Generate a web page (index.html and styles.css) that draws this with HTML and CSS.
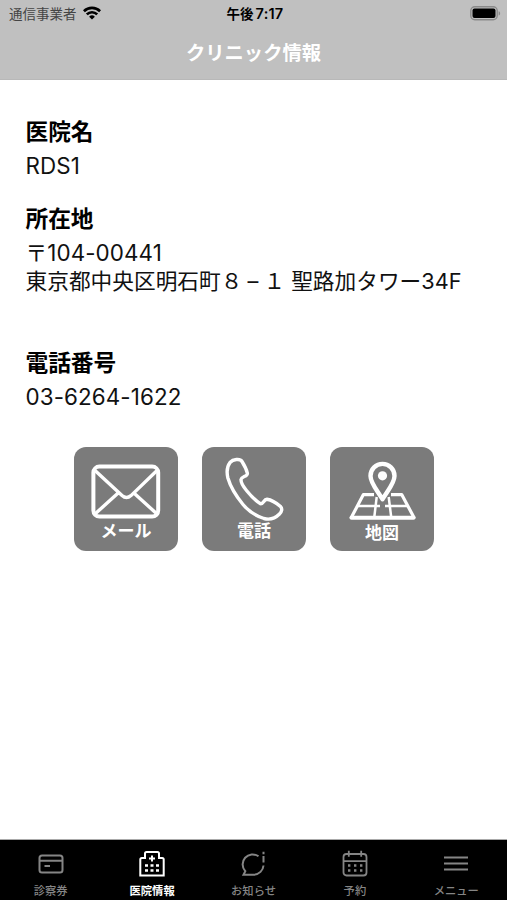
FILE: index.html
```html
<!DOCTYPE html>
<html lang="ja">
<head>
  <meta charset="UTF-8">
  <meta name="viewport" content="width=device-width, initial-scale=1.0">
  <title>クリニック情報</title>
  <link rel="stylesheet" href="styles.css">
</head>
<body>
  <header>
    <div class="status">
      <div class="carrier">
        <span>通信事業者</span>
        <svg class="wifi" width="18" height="14" viewBox="0 0 18 14" fill="none" stroke="#000" stroke-width="2.7">
          <path d="M.9 5.2a11.6 11.6 0 0 1 16.2 0"/>
          <path d="M3.8 8.4a7.4 7.4 0 0 1 10.4 0"/>
          <path d="M9 13.6L6.1 10.7a4.2 4.2 0 0 1 5.8 0z" fill="#000" stroke="none"/>
        </svg>
      </div>
      <div class="time">午後<span>7:17</span></div>
      <svg class="battery" width="31" height="15" viewBox="0 0 31 15">
        <rect x=".8" y=".8" width="26.4" height="13" rx="4" fill="none" stroke="#8a8a8a" stroke-width="1.4"/>
        <rect x="2.5" y="2.5" width="23" height="9.6" rx="2" fill="#000"/>
        <path d="M28.6 5.2c2 .6 2 3.8 0 4.4z" fill="#8a8a8a"/>
      </svg>
    </div>
    <h1>クリニック情報</h1>
  </header>

  <main>
    <section>
      <h2>医院名</h2>
      <p><span class="latin">RDS1</span></p>
    </section>
    <section class="address">
      <h2>所在地</h2>
      <p>〒<span class="latin">104-00441</span><br>東京都中央区明石町８<span class="dash">–</span>１ 聖路加タワー34F</p>
    </section>
    <section>
      <h2>電話番号</h2>
      <p><span class="latin">03-6264-1622</span></p>
    </section>

    <div class="actions">
      <a href="#" class="tile">
        <svg viewBox="0 0 104 104" fill="none" stroke="#fff" stroke-width="4">
          <rect x="19.4" y="19.6" width="64.8" height="50" rx="6"/>
          <path d="M21 23.5L48 48.6q4.5 4 9 0L83 23.5M21 67l22.6-20.6M83 67L60.4 46.4" stroke-width="3.4"/>
        </svg>
        <span>メール</span>
      </a>
      <a href="#" class="tile">
        <svg viewBox="0 0 104 104" fill="none" stroke="#fff" stroke-width="3.4" stroke-linejoin="round">
          <path d="M28 15.5C31 12.3 38 11.2 40 14.5C42.5 18.5 44.5 22.5 45.4 26.3C45.6 29.5 39.5 29.5 39 32.5C38.8 36 41.5 40 44.5 43.5C48.5 48.5 53.5 53.5 58.3 56.7C61.5 57.5 61.5 52.5 65 52.3C69.5 53 75 56.5 78.5 59.5C80.7 61.8 79.6 65 77.5 67C73 71.5 67.5 73 62 71.5C54 69 46.5 64 41 57.5C34.5 49.5 28.5 40 25.9 31C24.6 25.5 25 19.5 28 15.5z"/>
        </svg>
        <span>電話</span>
      </a>
      <a href="#" class="tile map">
        <svg viewBox="0 0 104 104" fill="none" stroke="#fff" stroke-linejoin="round">
          <path d="M44 47.6H33.4L21.3 70.5H84L71.7 47.6H61" stroke-width="3.2"/>
          <path d="M28 59H50M55 59H77M46.7 50L44.3 70M58.7 50L61.2 70" stroke-width="2.5"/>
          <path d="M21.5 70.8H83.5" stroke-width="4" stroke-linecap="round"/>
          <path d="M52.5 52.3C48.5 45 40.5 36.5 40.5 28.9a12 12 0 0 1 24 0C64.5 36.5 56.5 45 52.5 52.3z" stroke-width="4.4"/>
          <circle cx="52.5" cy="28.8" r="4.6" fill="#fff" stroke="none"/>
        </svg>
        <span>地図</span>
      </a>
    </div>
  </main>

  <nav>
    <a href="#">
      <svg viewBox="0 0 30 30" fill="none" stroke="currentColor" stroke-width="2">
        <rect x="3.5" y="6.5" width="23" height="17" rx="2.5"/>
        <path d="M3.5 11.7h23M8.5 17h5.5"/>
      </svg>
      <span>診察券</span>
    </a>
    <a href="#" class="active">
      <svg viewBox="0 0 30 30" fill="none" stroke="currentColor" stroke-width="2">
        <path d="M3.3 26.5V10.5q0-1.5 1.5-1.5H8V4.5q0-1.5 1.5-1.5h11q1.5 0 1.5 1.5V9h3.2q1.5 0 1.5 1.5v16z"/>
        <path d="M15 6.5v6M12 9.5h6"/>
        <path d="M8 16.5h3M13.5 16.5h3M19 16.5h3M8 21.5h3M13.5 21.5h3M19 21.5h3" stroke-width="2.4"/>
      </svg>
      <span>医院情報</span>
    </a>
    <a href="#">
      <svg viewBox="0 0 30 30" fill="none" stroke="currentColor" stroke-width="2">
        <path d="M19.5 7.3A10 10 0 0 0 6.3 22.2L4.5 25.7H15A10 10 0 0 0 24.5 16.5"/>
        <path d="M24.5 2.8v2.4M24.5 7v6.5"/>
      </svg>
      <span>お知らせ</span>
    </a>
    <a href="#">
      <svg viewBox="0 0 30 30" fill="none" stroke="currentColor" stroke-width="1.8">
        <rect x="3.5" y="5" width="23" height="21.5" rx="3"/>
        <path d="M3.5 12.2h23M8.8 1.8v6M21.2 1.8v6"/>
        <path d="M8 16.5h2.4M14 16.5h2.4M20 16.5h2.4M8 21.5h2.4M14 21.5h2.4M20 21.5h2.4" stroke-width="2.4"/>
      </svg>
      <span>予約</span>
    </a>
    <a href="#">
      <svg viewBox="0 0 30 30" fill="none" stroke="currentColor" stroke-width="2">
        <path d="M3 8.5h24M3 14.5h24M3 20.5h24"/>
      </svg>
      <span>メニュー</span>
    </a>
  </nav>
</body>
</html>
```
FILE: styles.css
```css
* { margin: 0; padding: 0; box-sizing: border-box; }

body {
  display: flex;
  flex-direction: column;
  height: 100vh;
  font-family: Inter, "Noto Sans CJK JP", sans-serif;
  background: white;
  color: #111;
}

header {
  height: 80px;
  background: #c0c0c0;
  border-bottom: 1px solid #b8b8b8;
}

.status {
  display: grid;
  grid-template-columns: 1fr auto 1fr;
  align-items: center;
  height: 27px;
  padding: 0 6px 0 9px;
  font-size: 13.5px;
}

.carrier {
  display: flex;
  align-items: center;
  gap: 6px;
  margin-top: -2px;
  color: #444;
}

.time {
  margin-top: -2px;
  font-weight: 600;
  color: #000;
}

.time span {
  margin-left: 2px;
  font-size: 14.5px;
  letter-spacing: 0.2px;
}

.battery { justify-self: end; }

h1 {
  text-align: center;
  font-size: 19.3px;
  line-height: 52px;
  color: white;
}

main {
  flex: 1;
  padding: 35px 25.5px 0;
}

section { margin-bottom: 22px; }

h2 {
  font-size: 22.7px;
  line-height: 34px;
  color: #000;
}

p {
  font-size: 21.7px;
  line-height: 28px;
  padding-top: 3px;
  white-space: nowrap;
}

.latin {
  font-size: 22.4px;
  letter-spacing: 0.1px;
}

.address { margin-bottom: 51px; }

.dash {
  display: inline-block;
  width: 21px;
  text-align: center;
}

.actions {
  display: flex;
  justify-content: center;
  gap: 24px;
  margin-top: 36px;
  padding-left: 1px;
}

.tile {
  display: grid;
  width: 104px;
  height: 104px;
  border-radius: 12px;
  background: #7b7b7b;
  color: white;
  font-size: 17px;
  font-weight: bold;
  line-height: 20px;
  text-decoration: none;
}

.tile svg, .tile span { grid-area: 1 / 1; }

.tile span {
  align-self: end;
  text-align: center;
  padding-bottom: 10px;
}

.tile.map span { padding-bottom: 8px; }

nav {
  display: flex;
  height: 61px;
  background: black;
  border-top: 1px solid #aaa;
}

nav a {
  flex: 1;
  display: flex;
  flex-direction: column;
  align-items: center;
  padding-top: 9px;
  color: #858585;
  font-size: 11.3px;
  font-weight: 500;
  line-height: 14px;
  text-decoration: none;
}

nav svg {
  width: 30px;
  height: 30px;
  margin-bottom: 5px;
}

nav .active {
  color: white;
  font-weight: bold;
}
```
